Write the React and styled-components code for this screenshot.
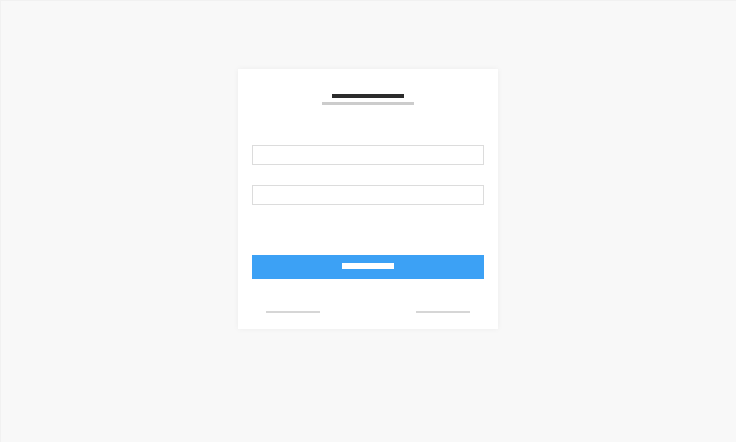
import React from 'react';
import styled, { createGlobalStyle } from 'styled-components';

const GlobalStyle = createGlobalStyle`
  html, body {
    margin: 0;
    padding: 0;
    background: #f8f8f8;
    font-family: 'Liberation Sans', Arial, sans-serif;
  }
`;

const Page = styled.div`
  width: 736px;
  height: 442px;
  box-sizing: border-box;
  display: flex;
  justify-content: center;
  align-items: flex-start;
  padding-top: 69px;
  background: #f8f8f8;
  box-shadow: inset 1px 1px 0 #f1f1f1;
`;

const Card = styled.div`
  width: 260px;
  box-sizing: border-box;
  padding: 25px 14px 16px;
  background: #fff;
  box-shadow: 0 0 6px rgba(0, 0, 0, 0.05);
  display: flex;
  flex-direction: column;
  align-items: center;
`;

// placeholder strip standing in for a line of text
const Bar = styled.div`
  width: ${p => p.w}px;
  height: ${p => p.h}px;
  background: ${p => p.color};
  margin-top: ${p => p.mt || 0}px;
`;

const Field = styled.input`
  display: block;
  width: 100%;
  height: 20px;
  box-sizing: border-box;
  border: 1px solid #dcdcdc;
  background: #fff;
  margin: ${p => p.mt}px 0 0;
  padding: 0;
  outline: none;
`;

const Submit = styled.button`
  width: 100%;
  height: 24px;
  margin-top: 50px;
  border: none;
  padding: 0 0 2px;
  background: #3ca1f5;
  display: flex;
  align-items: center;
  justify-content: center;
  cursor: pointer;
`;

const Links = styled.div`
  width: 100%;
  display: flex;
  justify-content: space-between;
  padding: 0 14px;
  box-sizing: border-box;
  margin-top: 32px;
`;

export default function App() {
  return (
    <>
      <GlobalStyle />
      <Page>
        <Card>
          <Bar w={72} h={4} color="#2b2b2b" />
          <Bar w={92} h={3} color="#cccccc" mt={4} />
          <Field mt={40} />
          <Field mt={20} />
          <Submit>
            <Bar w={52} h={6} color="#ffffff" />
          </Submit>
          <Links>
            <Bar w={54} h={2} color="#d6d6d6" />
            <Bar w={54} h={2} color="#d6d6d6" />
          </Links>
        </Card>
      </Page>
    </>
  );
}
